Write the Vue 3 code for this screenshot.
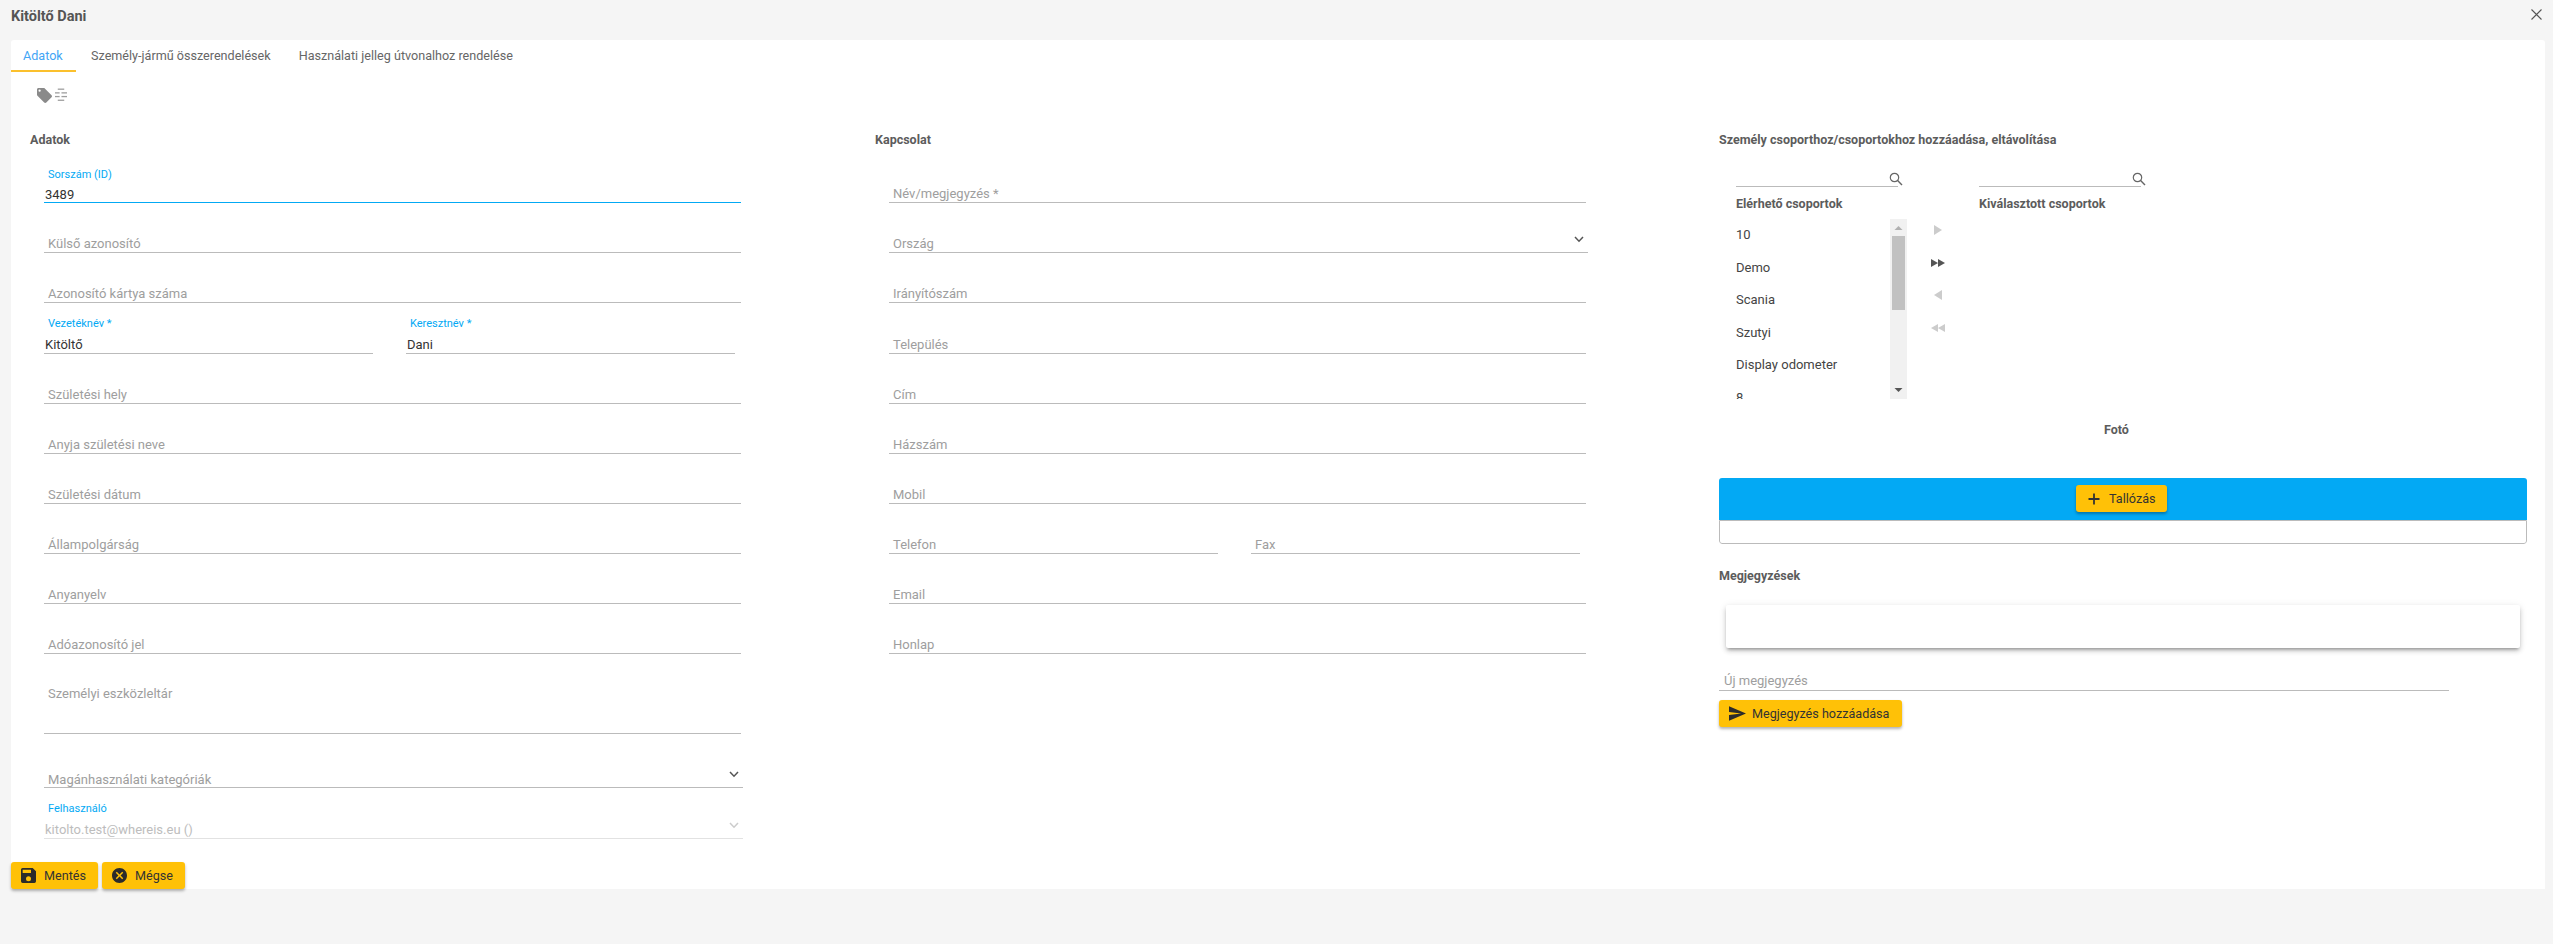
<script setup>
const col1 = [
  { label: 'Külső azonosító' },
  { label: 'Azonosító kártya száma' }
]
const col1b = ['Születési hely', 'Anyja születési neve', 'Születési dátum', 'Állampolgárság', 'Anyanyelv', 'Adóazonosító jel']
const col2a = ['Irányítószám', 'Település', 'Cím', 'Házszám', 'Mobil']
const groups = ['10', 'Demo', 'Scania', 'Szutyi', 'Display odometer', '8']
</script>

<template>
  <div class="page">
    <header class="titlebar">
      <span class="title">Kitöltő Dani</span>
      <svg class="close" viewBox="0 0 11 11" width="11" height="11"><path d="M0.5 0.5L10.5 10.5M10.5 0.5L0.5 10.5" stroke="#555" stroke-width="1.1" fill="none" /></svg>
    </header>

    <main class="panel">
      <nav class="tabs">
        <div class="tab active">Adatok</div>
        <div class="tab">Személy-jármű összerendelések</div>
        <div class="tab">Használati jelleg útvonalhoz rendelése</div>
      </nav>

      <div class="toolbar">
        <svg class="tag" viewBox="2 2 20 20" width="15" height="15"><path fill="#8a8a8a" d="M5.5,7A1.5,1.5 0 0,1 4,5.5A1.5,1.5 0 0,1 5.5,4A1.5,1.5 0 0,1 7,5.5A1.5,1.5 0 0,1 5.5,7M21.41,11.58L12.41,2.58C12.05,2.22 11.55,2 11,2H4C2.89,2 2,2.89 2,4V11C2,11.55 2.22,12.05 2.59,12.41L11.58,21.41C11.95,21.77 12.45,22 13,22C13.55,22 14.05,21.77 14.41,21.41L21.41,14.41C21.78,14.05 22,13.55 22,13C22,12.45 21.77,11.94 21.41,11.58Z" /></svg>
        <svg viewBox="0 0 13 14" width="12" height="14" fill="#9e9e9e">
          <rect x="3" y="0" width="7" height="1.4" />
          <rect x="0" y="4" width="5" height="1.4" /><rect x="7" y="4" width="6" height="1.4" />
          <rect x="0" y="8" width="5" height="1.4" /><rect x="7" y="8" width="6" height="1.4" />
          <rect x="3" y="12" width="7" height="1.4" />
        </svg>
      </div>

      <div class="columns">
        <section class="col">
          <h3 class="heading">Adatok</h3>
          <div class="fields">
            <div class="field focused">
              <span class="float">Sorszám (ID)</span>
              <span class="value">3489</span>
            </div>
            <div v-for="f in col1" :key="f.label" class="field"><span class="ph">{{ f.label }}</span></div>
            <div class="pair">
              <div class="field half">
                <span class="float">Vezetéknév *</span>
                <span class="value">Kitöltő</span>
              </div>
              <div class="field half">
                <span class="float">Keresztnév *</span>
                <span class="value">Dani</span>
              </div>
            </div>
            <div v-for="f in col1b" :key="f" class="field"><span class="ph">{{ f }}</span></div>
            <div class="field area"><span class="ph">Személyi eszközleltár</span></div>
            <div class="field select tall">
              <span class="ph">Magánhasználati kategóriák</span>
              <svg class="chev" viewBox="0 0 10 7" width="10" height="7"><path d="M1 1L5 5.2L9 1" stroke="#555" stroke-width="1.5" fill="none" /></svg>
            </div>
            <div class="field select disabled">
              <span class="float">Felhasználó</span>
              <span class="value">kitolto.test@whereis.eu ()</span>
              <svg class="chev" viewBox="0 0 10 7" width="10" height="7"><path d="M1 1L5 5.2L9 1" stroke="#ccc" stroke-width="1.5" fill="none" /></svg>
            </div>
          </div>
        </section>

        <section class="col col2">
          <h3 class="heading">Kapcsolat</h3>
          <div class="fields">
            <div class="field"><span class="ph">Név/megjegyzés *</span></div>
            <div class="field select">
              <span class="ph">Ország</span>
              <svg class="chev" viewBox="0 0 10 7" width="10" height="7"><path d="M1 1L5 5.2L9 1" stroke="#555" stroke-width="1.5" fill="none" /></svg>
            </div>
            <div v-for="f in col2a" :key="f" class="field"><span class="ph">{{ f }}</span></div>
            <div class="pair">
              <div class="field half"><span class="ph">Telefon</span></div>
              <div class="field half"><span class="ph">Fax</span></div>
            </div>
            <div class="field"><span class="ph">Email</span></div>
            <div class="field"><span class="ph">Honlap</span></div>
          </div>
        </section>

        <section class="col col3">
          <h3 class="heading">Személy csoporthoz/csoportokhoz hozzáadása, eltávolítása</h3>
          <div class="picker">
            <div class="plist">
              <div class="search">
                <svg class="mag" viewBox="0 0 14 14" width="14" height="14"><circle cx="5.5" cy="5.5" r="4.2" stroke="#666" stroke-width="1.2" fill="none" /><path d="M8.6 8.6L13 13" stroke="#666" stroke-width="1.4" /></svg>
              </div>
              <div class="phead">Elérhető csoportok</div>
              <div class="listbox">
                <div class="items">
                  <div v-for="g in groups" :key="g" class="item">{{ g }}</div>
                </div>
                <div class="scroll">
                  <svg viewBox="0 0 17 17" width="17" height="17"><path d="M4.5 11L8.5 7L12.5 11Z" fill="#b0b0b0" /></svg>
                  <div class="thumb"></div>
                  <svg class="sdown" viewBox="0 0 17 17" width="17" height="17"><path d="M4.5 6L8.5 10L12.5 6Z" fill="#555" /></svg>
                </div>
              </div>
            </div>
            <div class="arrows">
              <svg viewBox="0 0 14 12" width="14" height="12"><path d="M3 1L11 6L3 11Z" fill="#ccc" /></svg>
              <svg viewBox="0 0 14 12" width="14" height="12"><path d="M0 2L7 6L0 10ZM7 2L14 6L7 10Z" fill="#555" /></svg>
              <svg viewBox="0 0 14 12" width="14" height="12"><path d="M11 1L3 6L11 11Z" fill="#ccc" /></svg>
              <svg viewBox="0 0 14 12" width="14" height="12"><path d="M7 2L0 6L7 10ZM14 2L7 6L14 10Z" fill="#ccc" /></svg>
            </div>
            <div class="plist right">
              <div class="search">
                <svg class="mag" viewBox="0 0 14 14" width="14" height="14"><circle cx="5.5" cy="5.5" r="4.2" stroke="#666" stroke-width="1.2" fill="none" /><path d="M8.6 8.6L13 13" stroke="#666" stroke-width="1.4" /></svg>
              </div>
              <div class="phead">Kiválasztott csoportok</div>
            </div>
          </div>

          <div class="foto">Fotó</div>

          <div class="upload">
            <div class="uphead">
              <button class="btn browse">
                <svg viewBox="0 0 14 14" width="14" height="14"><path d="M7 1.5V12.5M1.5 7H12.5" stroke="#333" stroke-width="1.8" /></svg>
                Tallózás
              </button>
            </div>
            <div class="upbody"></div>
          </div>

          <h3 class="heading notes">Megjegyzések</h3>
          <div class="card"></div>
          <div class="field newnote"><span class="ph">Új megjegyzés</span></div>
          <button class="btn send">
            <svg viewBox="2 3 21 18" width="17" height="15"><path fill="#2b2b2b" d="M2,21L23,12L2,3V10L17,12L2,14V21Z" /></svg>
            Megjegyzés hozzáadása
          </button>
        </section>
      </div>

      <div class="actions">
        <button class="btn save">
          <svg viewBox="3 3 18 18" width="15" height="15"><path fill="#2b2b2b" d="M15,9H5V5H15M12,19A3,3 0 0,1 9,16A3,3 0 0,1 12,13A3,3 0 0,1 15,16A3,3 0 0,1 12,19M17,3H5C3.89,3 3,3.9 3,5V19A2,2 0 0,0 5,21H19A2,2 0 0,0 21,19V7L17,3Z" /></svg>
          Mentés
        </button>
        <button class="btn cancel">
          <svg viewBox="2 2 20 20" width="15" height="15"><path fill="#2b2b2b" d="M12,2C17.53,2 22,6.47 22,12C22,17.53 17.53,22 12,22C6.47,22 2,17.53 2,12C2,6.47 6.47,2 12,2M15.59,7L12,10.59L8.41,7L7,8.41L10.59,12L7,15.59L8.41,17L12,13.41L15.59,17L17,15.59L13.41,12L17,8.41L15.59,7Z" /></svg>
          Mégse
        </button>
      </div>
    </main>
  </div>
</template>

<style>
html, body { background: #f5f5f5; }
</style>

<style scoped>
.page {
  width: 2553px;
  height: 944px;
  background: #f5f5f5;
  font-family: Roboto, "Liberation Sans", sans-serif;
  font-size: 13px;
  color: #333;
  overflow: hidden;
}
.titlebar {
  height: 40px;
  display: flex;
  align-items: flex-start;
  justify-content: space-between;
  padding: 9px 11px 0 11px;
  box-sizing: border-box;
}
.title { font-weight: 700; font-size: 14.5px; line-height: 15px; color: #555; }
.panel {
  margin-left: 11px;
  width: 2534px;
  height: 849px;
  background: #fff;
  border-radius: 3px 3px 0 0;
  display: flex;
  flex-direction: column;
}
.tabs { display: flex; height: 32px; box-sizing: border-box; }
.tab {
  padding: 0 13px 0 15px;
  line-height: 32px;
  font-size: 12.6px;
  color: #666;
  white-space: nowrap;
}
.tab.active { color: #42a5f5; box-shadow: inset 0 -2px 0 #fbc02d; padding: 0 13px 0 12px; width: 65px; box-sizing: border-box; }
.tab:nth-child(3) { padding-left: 15px; }
.toolbar {
  height: 55px;
  box-sizing: border-box;
  padding: 16px 0 0 26px;
  display: flex;
  gap: 3px;
  align-items: flex-start;
}
.columns { display: flex; flex: 1; padding-left: 19px; min-height: 0; }
.col { width: 845px; flex: none; }
.col2 { width: 844px; }
.col3 { width: 808px; }
.heading {
  margin: 0;
  height: 26px;
  line-height: 26px;
  font-size: 12.5px;
  font-weight: 700;
  color: #5c5c5c;
}
.fields { width: 697px; margin-left: 14px; }
.field {
  height: 50.15px;
  box-sizing: border-box;
  border-bottom: 1px solid #bbb;
  display: flex;
  flex-direction: column;
  justify-content: flex-end;
  position: relative;
}
.ph { color: #9e9e9e; font-size: 13px; line-height: 16px; padding: 0 0 0 4px; }
.float { color: #03a9f4; font-size: 11px; line-height: 13px; padding-left: 4px; margin-bottom: 7px; }
.value { font-size: 13px; line-height: 16px; padding-left: 1px; color: #333; }
.focused { border-bottom-color: #03a9f4; }
.focused .value { margin-bottom: -1px; }
.focused .float { margin-bottom: 6px; }
.pair { display: flex; gap: 33px; }
.half { width: 329px; }
.area { height: 80px; justify-content: flex-start; padding-top: 32px; }
.tall { height: 54px; }
.tall .ph { margin-bottom: -1px; }
.select { width: 699px; }
.chev { position: absolute; right: 4px; bottom: 9px; }
.disabled { border-bottom-color: #e2e2e2; height: 51px; }
.disabled .value { color: #bdbdbd; }
.picker { display: flex; padding-left: 17px; height: 246px; }
.plist { width: 171px; flex: none; }
.plist.right { width: 162px; }
.search {
  width: 162px;
  height: 34px;
  box-sizing: border-box;
  border-bottom: 1px solid #bbb;
  position: relative;
}
.mag { position: absolute; right: -5px; top: 19px; }
.phead {
  height: 32px;
  line-height: 34px;
  font-size: 12.5px;
  font-weight: 700;
  color: #5c5c5c;
}
.listbox { display: flex; height: 180px; overflow: hidden; }
.items { width: 154px; flex: none; }
.item { height: 32.5px; line-height: 32.5px; font-size: 13px; color: #444; }
.scroll {
  width: 17px;
  background: #f1f1f1;
  display: flex;
  flex-direction: column;
  align-items: center;
}
.scroll svg { flex: none; }
.thumb { width: 13px; height: 74px; background: #c1c1c1; flex: none; }
.sdown { margin-top: auto; }
.arrows {
  width: 72px;
  flex: none;
  padding-top: 71px;
  display: flex;
  flex-direction: column;
  align-items: flex-start;
  padding-left: 24px;
  box-sizing: border-box;
  gap: 20.6px;
}
.foto {
  height: 79px;
  padding-left: 385px;
  padding-top: 23px;
  box-sizing: border-box;
  font-weight: 700;
  font-size: 12.5px;
  line-height: 16px;
  color: #5c5c5c;
}
.upload { border-radius: 3px; overflow: hidden; }
.uphead {
  height: 42px;
  background: #03a9f4;
  display: flex;
  justify-content: center;
  align-items: flex-start;
  padding: 7px 3px 0 0;
  box-sizing: border-box;
}
.upbody {
  height: 24px;
  box-sizing: border-box;
  border: 1px solid #bbb;
  border-radius: 0 0 3px 3px;
}
.notes { margin-top: 19px; height: 26px; }
.card {
  margin: 16px 7px 0 7px;
  height: 43px;
  background: #fff;
  border-radius: 2px;
  box-shadow: 0 3px 3px -2px rgba(0,0,0,.3), 0 3px 5px rgba(0,0,0,.18), 0 1px 8px rgba(0,0,0,.08);
}
.newnote { width: 730px; height: 43px; }
.newnote .ph { padding-left: 5px; margin-bottom: 1px; }
.btn {
  height: 27px;
  display: inline-flex;
  align-items: center;
  gap: 6px;
  padding: 0 10px;
  background: #ffc107;
  border: 0;
  border-radius: 3px;
  font-family: inherit;
  font-size: 12.6px;
  color: #333;
  box-shadow: 0 2px 3px rgba(0,0,0,.3);
  box-sizing: border-box;
}
.save { width: 87px; gap: 8px; }
.cancel { width: 83px; gap: 8px; }
.browse { width: 91px; gap: 8px; padding: 0 11px; }
.send { width: 183px; margin-top: 9px; gap: 6px; padding: 0 10px; }
.actions { display: flex; gap: 4px; height: 27px; flex: none; }
</style>
